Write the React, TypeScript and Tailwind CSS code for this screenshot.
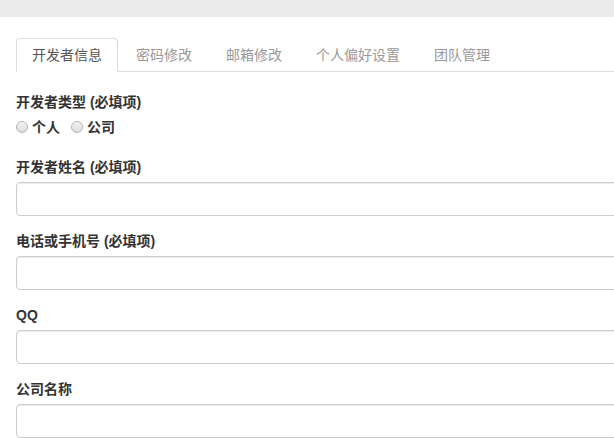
import React from "react";

const TABS = ["开发者信息", "密码修改", "邮箱修改", "个人偏好设置", "团队管理"];

const FIELDS = ["开发者姓名 (必填项)", "电话或手机号 (必填项)", "QQ", "公司名称"];

function Radio({ label }: { label: string }) {
  return (
    <label className="flex items-center font-bold text-[#333]">
      <span className="w-[12px] h-[12px] rounded-full border border-[#b5b5b5] bg-gradient-to-b from-[#f4f4f4] to-[#dcdcdc] mr-[4px]" />
      {label}
    </label>
  );
}

export default function App() {
  return (
    <div
      className="w-[614px] h-[438px] overflow-hidden bg-white text-[14px] leading-[20px] text-[#333]"
      style={{ fontFamily: '"Liberation Sans", "Noto Sans CJK SC", sans-serif' }}
    >
      <div className="h-[17px] bg-[#ececec]" />

      <div className="w-[760px] pl-[16px] pt-[21px]">
        <ul className="flex border-b border-[#ddd]">
          {TABS.map((t, i) => (
            <li key={t} className="mr-[2px] -mb-px">
              <span
                className={
                  i === 0
                    ? "block px-[15px] py-[6px] leading-[20px] border border-[#ddd] border-b-white rounded-t-[4px] bg-white text-[#555]"
                    : "block px-[15px] py-[6px] leading-[20px] border border-transparent text-[#999]"
                }
              >
                {t}
              </span>
            </li>
          ))}
        </ul>

        <form className="pt-[20px]">
          <div className="mb-[15px]">
            <div className="font-bold mb-[5px]">开发者类型 (必填项)</div>
            <div className="flex gap-[11px] h-[25px] pb-[5px]">
              <Radio label="个人" />
              <Radio label="公司" />
            </div>
          </div>

          {FIELDS.map((f) => (
            <div key={f} className="mb-[15px]">
              <div className="font-bold mb-[5px]">{f}</div>
              <div className="h-[34px] border border-[#ccc] rounded-[4px] bg-white shadow-[inset_0_1px_1px_rgba(0,0,0,0.075)]" />
            </div>
          ))}
        </form>
      </div>
    </div>
  );
}
